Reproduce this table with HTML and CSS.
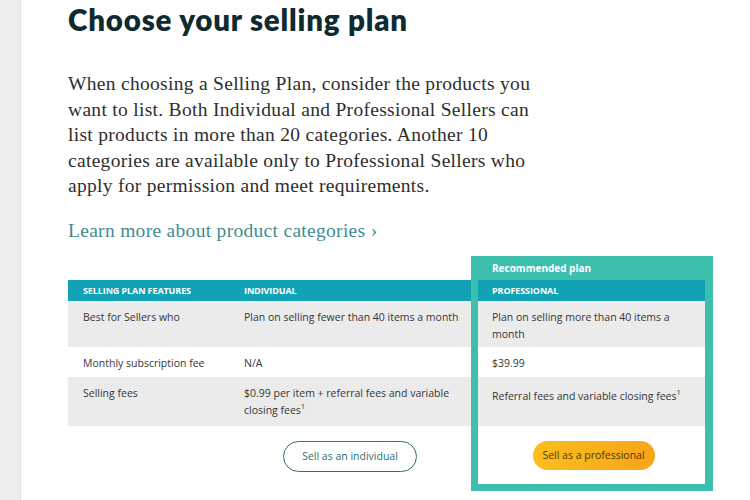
FILE: index.html
```html
<!DOCTYPE html>
<html>
<head>
<meta charset="utf-8">
<link rel="stylesheet" href="styles.css">
</head>
<body>
<div class="page">
  <div class="side"></div>
  <main class="main">
    <h1 class="title">Choose your selling plan</h1>
    <p class="intro">When choosing a Selling Plan, consider the products you want to list. Both Individual and Professional Sellers can list products in more than 20 categories. Another 10 categories are available only to Professional Sellers who apply for permission and meet requirements.</p>
    <a class="more" href="#">Learn more about product categories ›</a>

    <div class="plans">
      <div class="table">
        <div class="row head">
          <div class="cell c1">SELLING PLAN FEATURES</div>
          <div class="cell c2">INDIVIDUAL</div>
        </div>
        <div class="row r1 gray">
          <div class="cell c1">Best for Sellers who</div>
          <div class="cell c2">Plan on selling fewer than 40 items a month</div>
        </div>
        <div class="row r2">
          <div class="cell c1">Monthly subscription fee</div>
          <div class="cell c2">N/A</div>
        </div>
        <div class="row r3 gray">
          <div class="cell c1">Selling fees</div>
          <div class="cell c2">$0.99 per item + referral fees and variable closing fees<sup>1</sup></div>
        </div>
        <div class="row actions">
          <div class="cell c1"></div>
          <div class="cell c2 center"><a class="btn outline" href="#">Sell as an individual</a></div>
        </div>
      </div>

      <div class="pro">
        <div class="rec">Recommended plan</div>
        <div class="row head">
          <div class="cell">PROFESSIONAL</div>
        </div>
        <div class="row r1 gray">
          <div class="cell">Plan on selling more than 40 items a month</div>
        </div>
        <div class="row r2">
          <div class="cell">$39.99</div>
        </div>
        <div class="row r3 gray">
          <div class="cell mid">Referral fees and variable closing fees<sup>1</sup></div>
        </div>
        <div class="row actions pro-actions">
          <div class="cell center"><a class="btn primary" href="#">Sell as a professional</a></div>
        </div>
      </div>
    </div>
  </main>
</div>
</body>
</html>
```

FILE: styles.css
```css
* { box-sizing: border-box; }
html, body { margin: 0; padding: 0; background: #fff; }
.page {
  display: flex;
  width: 750px;
  height: 500px;
  overflow: hidden;
}
.side {
  width: 21px;
  flex: none;
  background: #eeeeee;
  border-right: 1px solid #e2e2e2;
}
.main {
  flex: 1;
  padding-left: 47px;
}
.title {
  margin: 0;
  padding-top: 2px;
  font-family: Lato, "Open Sans", sans-serif;
  font-weight: 800;
  font-size: 29.5px;
  line-height: 36px;
  color: #0f2a30;
  letter-spacing: 0.8px;
}
.intro {
  margin: 33px 0 0;
  width: 475px;
  font-family: "Liberation Serif", serif;
  font-size: 19.5px;
  line-height: 25.6px;
  color: #2e2e2e;
  letter-spacing: 0.3px;
}
.more {
  display: block;
  margin-top: 19px;
  font-family: "Liberation Serif", serif;
  font-size: 19.5px;
  line-height: 26px;
  color: #3e8c93;
  text-decoration: none;
  letter-spacing: 0.3px;
}
.plans {
  display: flex;
  align-items: flex-start;
  margin-top: 12px;
  font-family: "Open Sans", sans-serif;
  font-size: 10.5px;
  color: #363636;
}
.table {
  width: 403px;
  margin-top: 24px;
}
.row { display: flex; }
.cell {
  padding: 8px 4px 0 15px;
  line-height: 17px;
}
.c1 { width: 161px; }
.c2 { width: 242px; }
.head {
  height: 21px;
  background: #12a2b5;
  color: #fff;
  font-weight: 700;
  font-size: 9px;
  letter-spacing: -0.1px;
}
.head .cell { padding-top: 2px; }
.gray { background: #ebebeb; }
.r1 { height: 46px; }
.r2 { height: 30px; }
.r2 .cell { padding-top: 8px; }
.r3 { height: 49px; }
.r3 .cell { padding-top: 8px; }
.r3 .mid { padding-top: 11px; }
sup { font-size: 7.5px; line-height: 0; vertical-align: 5px; }
.actions { height: 58px; }
.actions .cell { padding: 15px 0 0; }
.center { display: flex; justify-content: center; }
.pro-actions .cell { width: 100%; padding-top: 15px; }
.btn {
  display: inline-flex;
  align-items: center;
  justify-content: center;
  text-decoration: none;
  border-radius: 16px;
  font-size: 10.5px;
}
.outline {
  width: 134px;
  height: 31px;
  border: 1.5px solid #2f6e76;
  color: #2f6e76;
  background: #fff;
}
.primary {
  width: 122px;
  height: 29px;
  color: #4a3a00;
  background: linear-gradient(90deg, #fcbe1d, #f7a51a);
  border-radius: 15px;
}
.pro {
  width: 242px;
  margin-left: 0;
  border: 7px solid #3dbfae;
  border-right-width: 8px;
  border-top: 0;
  background: #fff;
}
.pro .cell { width: 100%; padding-left: 14px; padding-right: 10px; }
.rec {
  height: 24px;
  margin: 0 -7px 0 -7px;
  padding: 5px 0 0 21px;
  background: #3dbfae;
  color: #fff;
  font-weight: 700;
  font-size: 10px;
  line-height: 14px;
}
```
